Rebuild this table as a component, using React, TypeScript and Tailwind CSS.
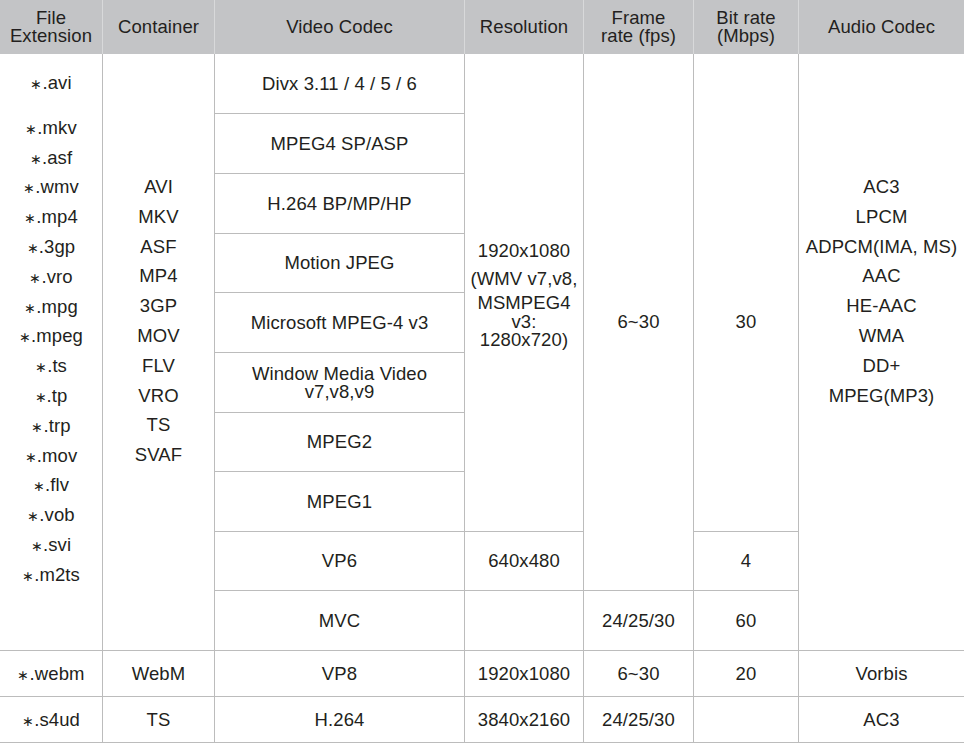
import type { ReactNode } from "react";

const headers = [
  ["File", "Extension"],
  ["Container"],
  ["Video Codec"],
  ["Resolution"],
  ["Frame", "rate (fps)"],
  ["Bit rate", "(Mbps)"],
  ["Audio Codec"],
];

const exts = [
  "mkv", "asf", "wmv", "mp4", "3gp", "vro", "mpg", "mpeg",
  "ts", "tp", "trp", "mov", "flv", "vob", "svi", "m2ts",
];

const containers = ["AVI", "MKV", "ASF", "MP4", "3GP", "MOV", "FLV", "VRO", "TS", "SVAF"];

const audio = ["AC3", "LPCM", "ADPCM(IMA, MS)", "AAC", "HE-AAC", "WMA", "DD+", "MPEG(MP3)"];

function Cell({ className = "", children }: { className?: string; children?: ReactNode }) {
  return (
    <div className={`flex items-center justify-center border-b border-[#bcbcbc] text-center ${className}`}>
      {children}
    </div>
  );
}

function Ext({ name }: { name: string }) {
  return (
    <div className="h-[29.8px] leading-[29.8px]">
      <span className="text-[14px] leading-none">∗</span>.{name}
    </div>
  );
}

export default function App() {
  return (
    <div className="w-[964px] h-[745px] bg-white text-[#231f20] text-[18.5px] tracking-[0.1px] font-['Liberation_Sans',Arial,sans-serif]">
      <div className="grid grid-cols-[103px_112px_250px_119px_110px_105px_165px] grid-rows-[54px_60px_60px_60px_59px_60px_60px_59px_60px_59px_60px_46px_46px]">
        {headers.map((h, i) => (
          <div
            key={i}
            className={`flex flex-col items-center justify-center bg-[#c3c4c6] pb-[1px] leading-[18px] ${
              i < 6 ? "border-r border-[#d8d9da]" : ""
            }`}
          >
            {h.map((t) => (
              <div key={t}>{t}</div>
            ))}
          </div>
        ))}

        {/* file extensions */}
        <div className="col-start-1 row-start-2 row-span-10 flex flex-col items-center border-r border-b border-[#bcbcbc] pt-[14px]">
          <div className="mb-[15px]">
            <Ext name="avi" />
          </div>
          {exts.map((e) => (
            <Ext key={e} name={e} />
          ))}
        </div>

        {/* containers */}
        <div className="col-start-2 row-start-2 row-span-10 flex flex-col items-center border-r border-b border-[#bcbcbc] pt-[118px] leading-[29.8px]">
          {containers.map((c) => (
            <div key={c}>{c}</div>
          ))}
        </div>

        {/* video codecs */}
        <Cell className="col-start-3 row-start-2 border-r">Divx 3.11 / 4 / 5 / 6</Cell>
        <Cell className="col-start-3 row-start-3 border-r">MPEG4 SP/ASP</Cell>
        <Cell className="col-start-3 row-start-4 border-r">H.264 BP/MP/HP</Cell>
        <Cell className="col-start-3 row-start-5 border-r">Motion JPEG</Cell>
        <Cell className="col-start-3 row-start-6 border-r">Microsoft MPEG-4 v3</Cell>
        <Cell className="col-start-3 row-start-7 border-r leading-[18px]">
          <div>
            Window Media Video
            <br />
            v7,v8,v9
          </div>
        </Cell>
        <Cell className="col-start-3 row-start-8 border-r">MPEG2</Cell>
        <Cell className="col-start-3 row-start-9 border-r">MPEG1</Cell>
        <Cell className="col-start-3 row-start-10 border-r">VP6</Cell>
        <Cell className="col-start-3 row-start-11 border-r">MVC</Cell>

        {/* resolution */}
        <Cell className="col-start-4 row-start-2 row-span-8 border-r">
          <div className="flex flex-col items-center">
            <div className="leading-[29px]">1920x1080</div>
            <div className="leading-[27px]">(WMV v7,v8,</div>
            <div className="leading-[21px]">MSMPEG4</div>
            <div className="leading-[18px]">v3:</div>
            <div className="leading-[18px]">1280x720)</div>
          </div>
        </Cell>
        <Cell className="col-start-4 row-start-10 border-r">640x480</Cell>
        <Cell className="col-start-4 row-start-11 border-r" />

        {/* frame rate */}
        <Cell className="col-start-5 row-start-2 row-span-9 border-r">6~30</Cell>
        <Cell className="col-start-5 row-start-11 border-r">24/25/30</Cell>

        {/* bit rate */}
        <div className="col-start-6 row-start-2 row-span-8 flex justify-center border-r border-b border-[#bcbcbc] pt-[253px] leading-[30px]">
          30
        </div>
        <Cell className="col-start-6 row-start-10 border-r">4</Cell>
        <Cell className="col-start-6 row-start-11 border-r">60</Cell>

        {/* audio codecs */}
        <div className="col-start-7 row-start-2 row-span-10 flex flex-col items-center border-b border-[#bcbcbc] pt-[118px] leading-[29.8px]">
          {audio.map((a) => (
            <div key={a}>{a}</div>
          ))}
        </div>

        {/* webm */}
        <Cell className="border-r">
          <Ext name="webm" />
        </Cell>
        <Cell className="border-r">WebM</Cell>
        <Cell className="border-r">VP8</Cell>
        <Cell className="border-r">1920x1080</Cell>
        <Cell className="border-r">6~30</Cell>
        <Cell className="border-r">20</Cell>
        <Cell>Vorbis</Cell>

        {/* s4ud */}
        <Cell className="border-r">
          <Ext name="s4ud" />
        </Cell>
        <Cell className="border-r">TS</Cell>
        <Cell className="border-r">H.264</Cell>
        <Cell className="border-r">3840x2160</Cell>
        <Cell className="border-r">24/25/30</Cell>
        <Cell className="border-r" />
        <Cell>AC3</Cell>
      </div>
    </div>
  );
}
